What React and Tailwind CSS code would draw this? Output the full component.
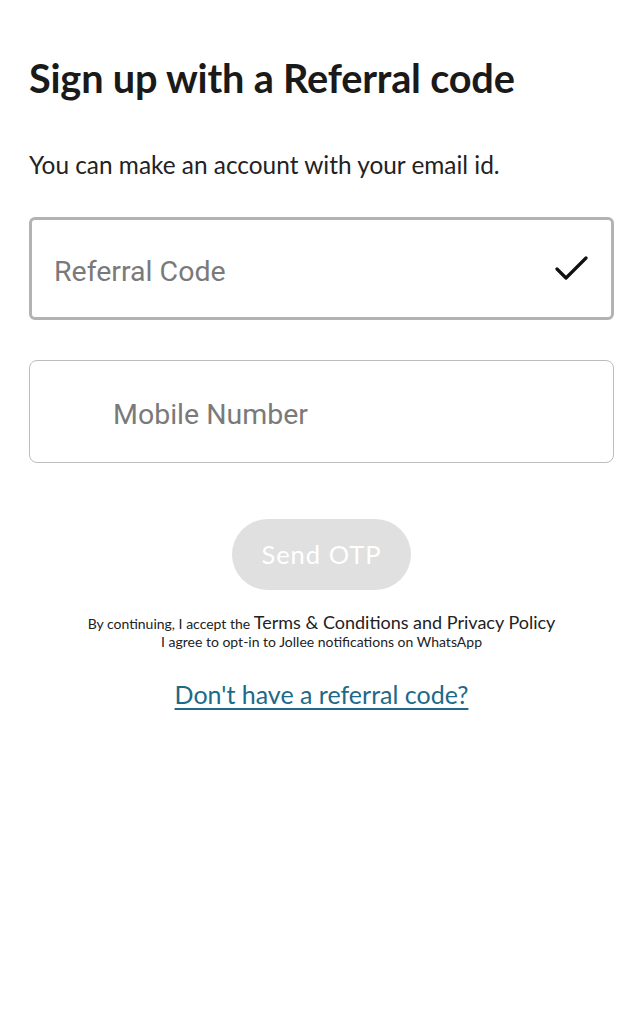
import { useState } from "react";

export default function App() {
  const [code, setCode] = useState("");
  const [mobile, setMobile] = useState("");

  return (
    <div className="min-h-screen bg-white px-[29px] pt-[52px]" style={{ fontFamily: "Lato, sans-serif" }}>
      <h1 className="text-[39.7px] font-bold text-[#1a1a1a] leading-[52px] tracking-[-0.2px]">
        Sign up with a Referral code
      </h1>
      <p className="mt-[45px] text-[24.4px] text-[#222] leading-[32px]">
        You can make an account with your email id.
      </p>

      {/* Referral code */}
      <div className="mt-[36px] h-[103px] flex items-center border-[3px] border-[#b3b3b3] rounded-[6px] pl-[22px] pr-[22px]">
        <input
          value={code}
          onChange={(e) => setCode(e.target.value)}
          placeholder="Referral Code"
          className="flex-1 bg-transparent outline-none pt-[8px] text-[28.5px] text-[#333] placeholder:text-[#7a7a7a]"
          style={{ fontFamily: "Roboto, sans-serif" }}
        />
        <svg width="34" height="28" viewBox="0 0 34 28" fill="none" className="shrink-0 mt-[2px]">
          <path d="M2 13 L11 22 L31 2" stroke="#111" strokeWidth="3.2" strokeLinecap="round" strokeLinejoin="round" />
        </svg>
      </div>

      {/* Mobile */}
      <div className="mt-[40px] h-[103px] flex items-center border-[1.5px] border-[#bdbdbd] rounded-[8px] pl-[83px] pr-6">
        <input
          value={mobile}
          onChange={(e) => setMobile(e.target.value)}
          placeholder="Mobile Number"
          className="flex-1 bg-transparent outline-none pt-[8px] text-[28.5px] text-[#333] placeholder:text-[#7a7a7a]"
          style={{ fontFamily: "Roboto, sans-serif" }}
        />
      </div>

      <div className="flex justify-center mt-[56px]">
        <button
          disabled
          className="w-[179px] h-[71px] rounded-full bg-[#e0e0e0] text-white text-[25.5px] tracking-[1px]"
        >
          Send OTP
        </button>
      </div>

      <div className="mt-[23px] text-center text-[#222]">
        <p className="leading-[19px]">
          <span className="text-[14px]">By continuing, I accept the </span>
          <span className="text-[18px]">Terms &amp; Conditions and Privacy Policy</span>
        </p>
        <p className="text-[14px] leading-[18px]">I agree to opt-in to Jollee notifications on WhatsApp</p>
      </div>

      <div className="mt-[25px] text-center">
        <a href="#" className="text-[25px] text-[#1c6a88] underline underline-offset-[4px] decoration-[2px]">
          Don't have a referral code?
        </a>
      </div>
    </div>
  );
}
